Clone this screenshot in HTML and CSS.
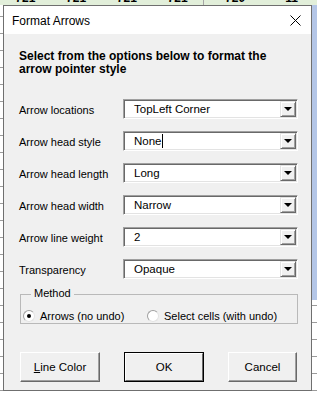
FILE: index.html
```html
<!DOCTYPE html>
<html lang="en">
<head>
  <meta charset="UTF-8" />
  <title>Format Arrows</title>
  <link rel="stylesheet" href="styles.css">
</head>
<body>
  <!-- Spreadsheet header row peeking out above the dialog -->
  <div class="sheet-top">
    <div class="sheet-top-inner">
      <span class="cell">721</span>
      <span class="cell">721</span>
      <span class="cell">721</span>
      <span class="cell">721</span>
      <span class="cell cell-split">720</span>
      <span class="cell">11</span>
    </div>
  </div>

  <div class="dialog">
    <div class="titlebar">
      <span class="title">Format Arrows</span>
      <svg class="close" width="11" height="11" viewBox="0 0 11 11">
        <path d="M0.5 0.5 L10.5 10.5 M10.5 0.5 L0.5 10.5" stroke="#000" stroke-width="1" fill="none" />
      </svg>
    </div>

    <div class="content">
      <p class="intro">Select from the options below to format the arrow pointer style</p>

      <div class="fields">
        <label class="field-label">Arrow locations</label>
        <div class="combo"><span class="combo-text">TopLeft Corner</span><span class="combo-btn"></span></div>

        <label class="field-label">Arrow head style</label>
        <div class="combo"><span class="combo-text">None<span class="caret"></span></span><span class="combo-btn"></span></div>

        <label class="field-label">Arrow head length</label>
        <div class="combo"><span class="combo-text">Long</span><span class="combo-btn"></span></div>

        <label class="field-label">Arrow head width</label>
        <div class="combo"><span class="combo-text">Narrow</span><span class="combo-btn"></span></div>

        <label class="field-label">Arrow line weight</label>
        <div class="combo"><span class="combo-text">2</span><span class="combo-btn"></span></div>

        <label class="field-label">Transparency</label>
        <div class="combo"><span class="combo-text">Opaque</span><span class="combo-btn"></span></div>
      </div>

      <div class="group">
        <span class="group-title">Method</span>
        <label class="radio radio-first"><span class="radio-dot checked"></span>Arrows (no undo)</label>
        <label class="radio"><span class="radio-dot"></span>Select cells (with undo)</label>
      </div>

      <div class="buttons">
        <button class="btn btn-line"><u>L</u>ine Color</button>
        <button class="btn btn-default"><span class="btn-inner">OK</span></button>
        <button class="btn btn-cancel">Cancel</button>
      </div>
    </div>
  </div>
</body>
</html>
```

FILE: styles.css
```css
body {
  margin: 0;
  width: 317px;
  height: 396px;
  overflow: hidden;
  font-family: "Liberation Sans", Arial, sans-serif;
  color: #000;
  background:
    linear-gradient(to right, transparent 312px, #b4c6e7 312px) top left / 100% 300px no-repeat,
    repeating-linear-gradient(to bottom, #fff 0, #fff 16px, #9b9b9b 16px, #9b9b9b 17px);
}

.sheet-top {
  height: 5px;
  overflow: hidden;
  background: #e2efda;
}

.sheet-top-inner {
  display: flex;
  margin-top: -9px;
  font-weight: bold;
  font-size: 12px;
  line-height: 14px;
}

.cell {
  width: 57px;
  text-align: center;
}

.cell-split {
  border-left: 1px solid #a6a6a6;
  width: 70px;
}

.dialog {
  margin-left: 3px;
  width: 309px;
  height: 386px;
  box-sizing: border-box;
  border: 1px solid #6f6f6f;
  background: #f0f0f0;
  display: flex;
  flex-direction: column;
}

.titlebar {
  height: 28px;
  background: #fff;
  display: flex;
  align-items: center;
  justify-content: space-between;
  padding: 0 10px 0 8px;
}

.title {
  font-size: 12px;
  color: #000;
  margin-top: 2px;
}

.close {
  display: block;
  margin-top: 1px;
}

.content {
  padding: 16px 13px 0 15px;
}

.intro {
  margin: 0;
  font-weight: bold;
  font-size: 12px;
  line-height: 13px;
  width: 275px;
}

.fields {
  display: grid;
  grid-template-columns: 104px 175px;
  row-gap: 12px;
  margin-top: 23px;
  align-items: center;
}

.field-label {
  font-size: 11px;
  padding-top: 2px;
}

.combo {
  height: 20px;
  box-sizing: border-box;
  background: #fff;
  border: 1px solid;
  border-color: #a0a0a0 #fff #fff #a0a0a0;
  box-shadow: inset 1px 1px 0 #696969, inset -1px -1px 0 #e3e3e3;
  display: flex;
  align-items: center;
  justify-content: space-between;
  padding: 0 1px 0 10px;
}

.combo-text {
  font-size: 11.5px;
}

.caret {
  display: inline-block;
  width: 1px;
  height: 14px;
  background: #000;
  vertical-align: -3px;
}

.combo-btn {
  width: 16px;
  height: 16px;
  box-sizing: border-box;
  background: #f0f0f0;
  border: 1px solid;
  border-color: #e3e3e3 #696969 #696969 #e3e3e3;
  box-shadow: inset 1px 1px 0 #fff, inset -1px -1px 0 #a0a0a0;
  position: relative;
}

.combo-btn::after {
  content: "";
  position: absolute;
  left: 3px;
  top: 5px;
  border-left: 4px solid transparent;
  border-right: 4px solid transparent;
  border-top: 4px solid #000;
}

.group {
  position: relative;
  margin: 15px 0 0 1px;
  width: 278px;
  height: 30px;
  box-sizing: border-box;
  border: 1px solid #b9b9b9;
  padding: 13px 0 0 2px;
  display: flex;
  align-items: center;
  align-self: flex-start;
}

.group-title {
  position: absolute;
  left: 10px;
  top: -8px;
  padding: 0 3px;
  background: #f0f0f0;
  font-size: 11px;
}

.radio {
  display: flex;
  align-items: center;
  font-size: 11px;
  height: 12px;
}

.radio-first {
  width: 124px;
}

.radio-dot {
  width: 12px;
  height: 12px;
  box-sizing: border-box;
  border-radius: 50%;
  border: 1px solid #a0a0a0;
  border-right-color: #e3e3e3;
  border-bottom-color: #e3e3e3;
  background: #fff;
  margin-right: 5px;
  position: relative;
}

.radio-dot.checked::after {
  content: "";
  position: absolute;
  left: 3px;
  top: 3px;
  width: 4px;
  height: 4px;
  border-radius: 50%;
  background: #000;
}

.buttons {
  display: flex;
  gap: 24px;
  margin: 28px 0 0 1px;
}

.btn {
  height: 30px;
  box-sizing: border-box;
  width: 80px;
  font-family: "Liberation Sans", Arial, sans-serif;
  font-size: 11.5px;
  background: #f0f0f0;
  border: 1px solid;
  border-color: #fff #696969 #696969 #fff;
  box-shadow: inset -1px -1px 0 #a0a0a0;
  padding: 0;
  color: #000;
}

.btn-cancel {
  width: 69px;
}

.btn-default {
  border: 1px solid #000;
  box-shadow: none;
  padding: 0;
}

.btn-inner {
  display: flex;
  align-items: center;
  justify-content: center;
  height: 100%;
  box-sizing: border-box;
  border: 1px solid;
  border-color: #fff #696969 #696969 #fff;
}
```
